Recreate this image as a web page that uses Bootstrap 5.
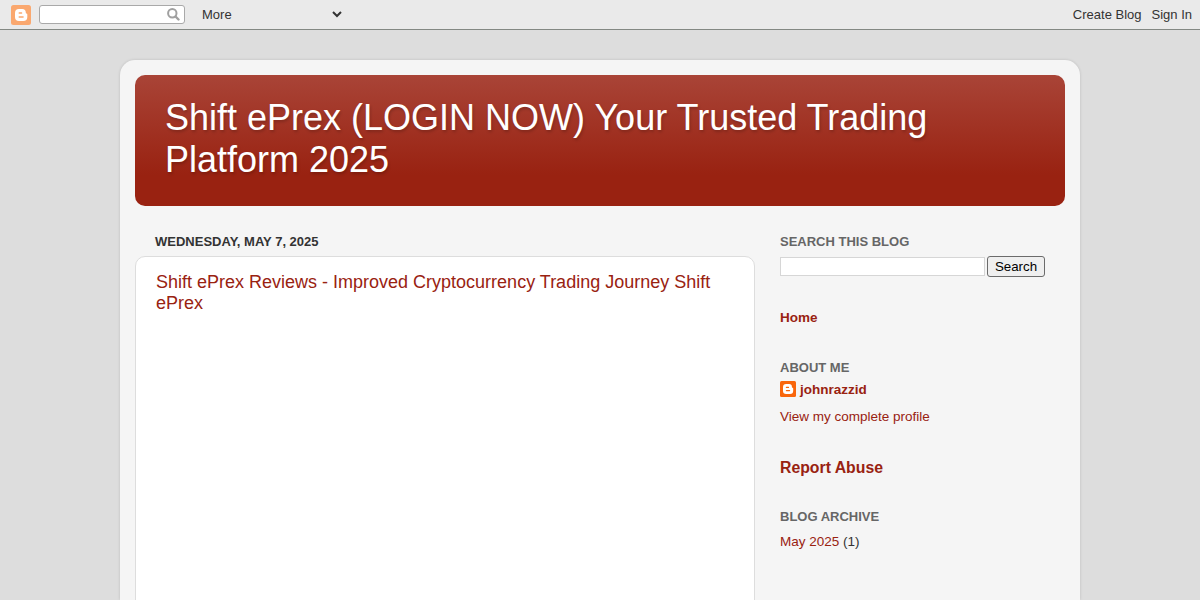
<!DOCTYPE html>
<html lang="en">
<head>
  <meta charset="UTF-8" />
  <meta name="viewport" content="width=device-width, initial-scale=1.0" />
  <title>Shift ePrex (LOGIN NOW) Your Trusted Trading Platform 2025</title>
  <link href="https://cdn.jsdelivr.net/npm/bootstrap@5.3.0/dist/css/bootstrap.min.css" rel="stylesheet">
  <style>
    body {
      background: #dddddd;
      color: #333333;
      font-family: "Liberation Sans", Arial, sans-serif;
      font-size: 13.5px;
      line-height: 18px;
      height: 600px;
    }
    a { color: #992211; text-decoration: none; }

    /* top bar */
    .blog-bar {
      height: 30px;
      background: #eaeaea;
      border-bottom: 1px solid #838883;
      font-size: 13px;
      padding: 0 8px 0 11px;
    }
    .blog-bar a { color: #333333; }
    .bar-search {
      width: 146px;
      height: 19px;
      margin-left: 8px;
      background: #ffffff;
      border: 1px solid #a9a9a9;
      border-radius: 3px;
      padding-right: 4px;
    }
    .bar-search input { min-width: 0; height: 16px; }
    .bar-more { width: 140px; margin-left: 17px; }
    .bar-links { gap: 10px; }

    /* page frame */
    .page-frame {
      width: 960px;
      height: 540px;
      margin-top: 30px;
      padding: 15px 15px 0;
      background: #f5f5f5;
      border-radius: 15px 15px 0 0;
      box-shadow: 0 0 3px rgba(0, 0, 0, .15);
    }
    .blog-header {
      height: 131px;
      padding: 22px 30px;
      border-radius: 10px;
      background: linear-gradient(#a94437 0, #992211 100px, #992211 100%);
    }
    .blog-header h1 {
      color: #ffffff;
      font-size: 36px;
      line-height: 42px;
      text-shadow: 1px 2px 3px rgba(0, 0, 0, .2);
    }

    .main-col { width: 620px; padding-top: 27px; }
    .post-date { font-size: 13px; line-height: 18px; padding-left: 20px; margin-bottom: 5px; }
    .post-box {
      height: 360px;
      background: #ffffff;
      border: 1px solid #dddddd;
      border-radius: 10px 10px 0 0;
      padding: 15px 20px;
    }
    .post-box h3 { font-size: 18px; line-height: 21px; }

    .side-col { width: 265px; margin-left: 25px; padding-top: 27px; }
    .side-col h2 { font-size: 13px; line-height: 18px; color: #666666; }
    .side-search { height: 21px; margin: 5px 0 32px; gap: 2px; }
    .side-search input { width: 205px; height: 19px; border: 1px solid #d6d6d6; background: #ffffff; }
    .side-search button {
      width: 58px;
      height: 21px;
      padding: 0;
      border: 1px solid #6b6b6b;
      border-radius: 3px;
      background: #efefef;
      color: #000000;
      font-size: 13.33px;
      line-height: 18px;
    }
    .home-link { margin-bottom: 32px; }
    .profile-name { margin: 4px 0 9px; }
    .profile-name svg { margin-bottom: 2px; }
    .report-link { font-size: 15.8px; line-height: 20px; margin: 32px 0 30px; }
    .archive-title { margin-bottom: 7px; }
  </style>
</head>
<body class="overflow-hidden">
  <nav class="blog-bar d-flex align-items-center">
    <svg width="20" height="20" viewBox="0 0 20 20">
      <rect width="20" height="20" rx="2.5" fill="#faa86f" />
      <path fill="#fff" d="M8 4h3.2A3.6 3.6 0 0 1 14.8 7.6c0 .8.2 1 .7 1s.8.3.8.9V12a4 4 0 0 1-4 4H8a4 4 0 0 1-4-4V8a4 4 0 0 1 4-4z" />
      <path stroke="#faa86f" stroke-width="1.4" stroke-linecap="round" d="M8.2 8h2.4M8.2 12h3.9" />
    </svg>
    <div class="bar-search d-flex align-items-center">
      <input class="flex-fill border-0 bg-transparent p-0" type="text" aria-label="Search" />
      <svg class="flex-shrink-0" width="13" height="13" viewBox="0 0 13 13" fill="none" stroke="#a0a0a0">
        <circle cx="5.3" cy="5.3" r="4.2" stroke-width="2" />
        <path d="M8.5 8.5l3 3" stroke-width="2.4" stroke-linecap="round" />
      </svg>
    </div>
    <div class="bar-more d-flex align-items-center justify-content-between">
      <a href="#">More</a>
      <svg width="10" height="7" viewBox="0 0 10 7" fill="none" stroke="#333" stroke-width="2">
        <path d="M1 1l4 4 4-4" />
      </svg>
    </div>
    <div class="bar-links d-flex ms-auto">
      <a href="#">Create Blog</a>
      <a href="#">Sign In</a>
    </div>
  </nav>

  <div class="page-frame mx-auto">
    <header class="blog-header">
      <h1 class="fw-normal mb-0">Shift ePrex (LOGIN NOW) Your Trusted Trading Platform 2025</h1>
    </header>

    <div class="d-flex">
      <main class="main-col">
        <h2 class="post-date fw-bold text-uppercase">Wednesday, May 7, 2025</h2>
        <article class="post-box">
          <h3 class="fw-normal mb-0"><a href="#">Shift ePrex Reviews - Improved Cryptocurrency Trading Journey Shift ePrex</a></h3>
        </article>
      </main>

      <aside class="side-col">
        <h2 class="fw-bold text-uppercase mb-0">Search This Blog</h2>
        <form class="side-search d-flex align-items-center">
          <input type="text" aria-label="Search this blog" />
          <button type="button">Search</button>
        </form>

        <div class="home-link fw-bold"><a href="#">Home</a></div>

        <h2 class="fw-bold text-uppercase mb-0">About Me</h2>
        <div class="profile-name d-flex align-items-center gap-1 fw-bold">
          <svg width="16" height="16" viewBox="0 0 16 16">
            <rect width="16" height="16" rx="1.5" fill="#f9660c" />
            <path fill="#fff" d="M6.2 3h2.9a2.8 2.8 0 0 1 2.8 2.8c0 .6.2.9.6.9s.7.2.7.7v2.4A3.2 3.2 0 0 1 10 13H6.2A3.2 3.2 0 0 1 3 9.8V6.2A3.2 3.2 0 0 1 6.2 3z" />
            <path stroke="#f9660c" stroke-width="1.2" stroke-linecap="round" d="M6.4 6.4h2.1M6.4 9.6h3.2" />
          </svg>
          <a href="#">johnrazzid</a>
        </div>
        <div><a href="#">View my complete profile</a></div>

        <div class="report-link fw-bold"><a href="#">Report Abuse</a></div>

        <h2 class="archive-title fw-bold text-uppercase">Blog Archive</h2>
        <div><a href="#">May 2025</a> (1)</div>
      </aside>
    </div>
  </div>

  <script src="https://cdn.jsdelivr.net/npm/bootstrap@5.3.0/dist/js/bootstrap.bundle.min.js"></script>
</body>
</html>
